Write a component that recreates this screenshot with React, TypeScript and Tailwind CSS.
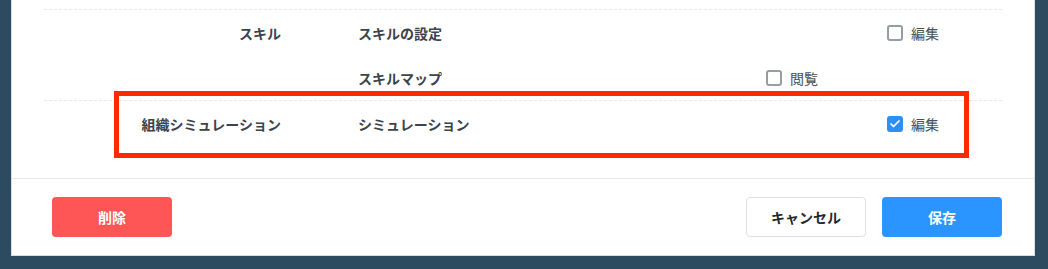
import { Check } from "lucide-react";

type Perm = { view?: boolean | null; edit?: boolean | null };

const groups = [
  {
    name: "スキル",
    items: [
      { label: "スキルの設定", view: null, edit: false },
      { label: "スキルマップ", view: false, edit: null },
    ],
    highlight: false,
  },
  {
    name: "組織シミュレーション",
    items: [{ label: "シミュレーション", view: null, edit: true }],
    highlight: true,
  },
];

function Box({ checked, label }: { checked: boolean; label: string }) {
  return (
    <label className="flex items-center gap-2 text-sm text-[#4a5056]">
      {checked ? (
        <span className="flex h-4 w-4 shrink-0 items-center justify-center rounded-[3px] bg-[#2b8ff5]">
          <Check className="h-3 w-3 text-white" strokeWidth={3.5} />
        </span>
      ) : (
        <span className="block h-4 w-4 shrink-0 rounded-[3px] border-2 border-[#959da5] bg-white" />
      )}
      {label}
    </label>
  );
}

function PermCell({ value, label }: { value: Perm["view"]; label: string }) {
  if (value === null || value === undefined) return null;
  return <Box checked={value} label={label} />;
}

export default function App() {
  return (
    <div
      className="h-[269px] w-[1048px] overflow-hidden bg-[#2c4b61]"
      style={{ fontFamily: '"Noto Sans CJK JP", "Noto Sans", sans-serif' }}
    >
      <div className="ml-[11px] w-[1024px] border-x border-b border-[#d5dde5] bg-white">
        {/* 権限一覧 */}
        <div className="px-[32px] pt-[9px] pb-[32px]">
          {groups.map((g) => (
            <div key={g.name} className="relative border-t border-dashed border-[#e6e8ea]">
              {g.highlight && (
                <div className="pointer-events-none absolute top-[-10px] left-[70px] h-[67px] w-[855px] border-[5px] border-[#ff2a00]" />
              )}
              {g.items.map((it, i) => (
                <div key={it.label} className="flex h-[45px] items-center text-sm">
                  <div className="w-[237px] text-right font-bold text-[#3c434a]">
                    {i === 0 ? g.name : ""}
                  </div>
                  <div className="ml-[77px] flex-1 font-bold text-[#3c434a]">{it.label}</div>
                  <div className="w-[121px]">
                    <PermCell value={it.view} label="閲覧" />
                  </div>
                  <div className="w-[115px]">
                    <PermCell value={it.edit} label="編集" />
                  </div>
                </div>
              ))}
            </div>
          ))}
        </div>

        {/* フッター */}
        <div className="flex items-center justify-between border-t border-[#e6e9ec] pt-[18px] pb-[18px] pl-[40px] pr-[32px]">
          <button className="h-[40px] w-[120px] rounded-[4px] bg-[#fe5656] text-sm font-bold text-white">
            削除
          </button>
          <div className="flex gap-4">
            <button className="h-[40px] w-[120px] rounded-[4px] border border-[#dde2e8] bg-white text-sm font-bold text-[#26292c]">
              キャンセル
            </button>
            <button className="h-[40px] w-[120px] rounded-[4px] bg-[#2b95ff] text-sm font-bold text-white">
              保存
            </button>
          </div>
        </div>
      </div>
    </div>
  );
}
